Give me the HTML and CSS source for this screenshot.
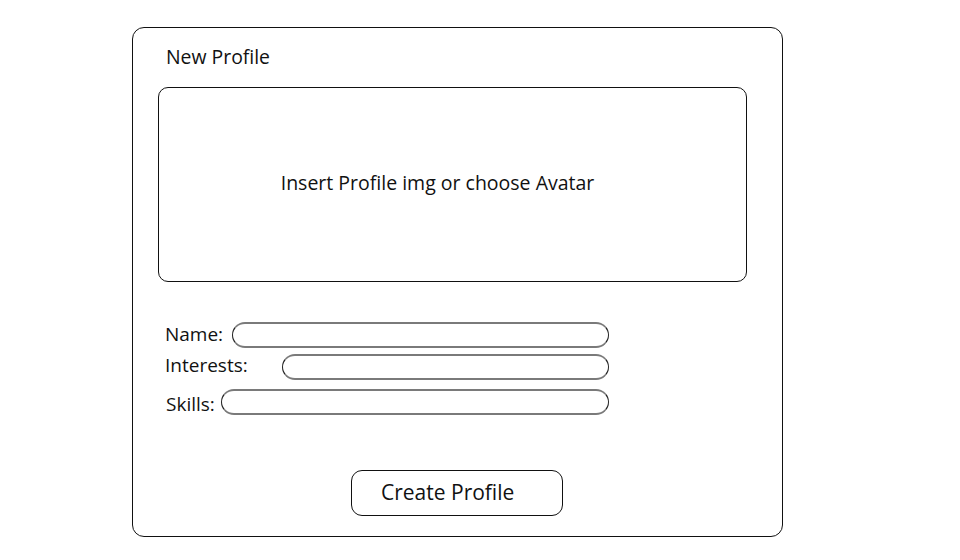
FILE: index.html
```html
<!DOCTYPE html>
<html>
<head>
<meta charset="utf-8">
<link rel="stylesheet" href="styles.css">
</head>
<body>
<div class="card">
  <div class="title">New Profile</div>
  <div class="photo">Insert Profile img or choose Avatar</div>
  <div class="fields">
    <div class="row row-name"><span class="label">Name:</span><span class="input"></span></div>
    <div class="row row-interests"><span class="label">Interests:</span><span class="input"></span></div>
    <div class="row row-skills"><span class="label">Skills:</span><span class="input"></span></div>
  </div>
  <div class="actions"><button class="btn">Create Profile</button></div>
</div>
</body>
</html>
```
FILE: styles.css
```css
html, body { margin: 0; padding: 0; background: #fff; }
body {
  font-family: "Open Sans", "Liberation Sans", sans-serif;
  color: #111;
  padding: 27px 0 0 132px;
}
.card {
  box-sizing: border-box;
  width: 651px;
  height: 510px;
  border: 1.3px solid #111;
  border-radius: 12px;
  padding: 0 0 0 25px;
  display: flex;
  flex-direction: column;
}
.title {
  font-size: 19.4px;
  margin: 16px 0 0 8px;
  line-height: 26px;
}
.photo {
  box-sizing: border-box;
  width: 589px;
  height: 195px;
  margin-top: 17px;
  border: 1.3px solid #111;
  border-radius: 10px;
  display: flex;
  align-items: center;
  justify-content: center;
  font-size: 19.5px;
  padding: 0 30px 4px 0;
}
.fields {
  margin-top: 40px;
  display: flex;
  flex-direction: column;
  width: 451px;
}
.row {
  display: flex;
  align-items: center;
  height: 26px;
}
.row-interests { margin-top: 6px; }
.row-skills { margin-top: 9px; }
.label {
  font-size: 19px;
  line-height: 26px;
  margin-left: 7px;
}
.row-name .label { margin-top: -3px; }
.row-interests .label { margin-top: -4px; }
.row-skills .label { margin-left: 8px; margin-top: 3px; }
.input {
  flex: 1;
  box-sizing: border-box;
  height: 26px;
  border: 1.5px solid #222;
  border-top: 2px solid #7a7a7a;
  border-bottom: 2px solid #7a7a7a;
  border-radius: 13px;
}
.row-name .input { margin-left: 9px; }
.row-interests .input { margin-left: 34px; }
.row-skills .input { margin-left: 6px; }
.actions {
  margin-top: auto;
  margin-bottom: 20px;
  padding-left: 193px;
}
.btn {
  box-sizing: border-box;
  width: 212px;
  height: 46px;
  border: 1.3px solid #111;
  border-radius: 11px;
  background: #fff;
  font-family: inherit;
  font-size: 21px;
  color: #111;
  text-align: left;
  padding: 0 0 2px 29px;
}
```
